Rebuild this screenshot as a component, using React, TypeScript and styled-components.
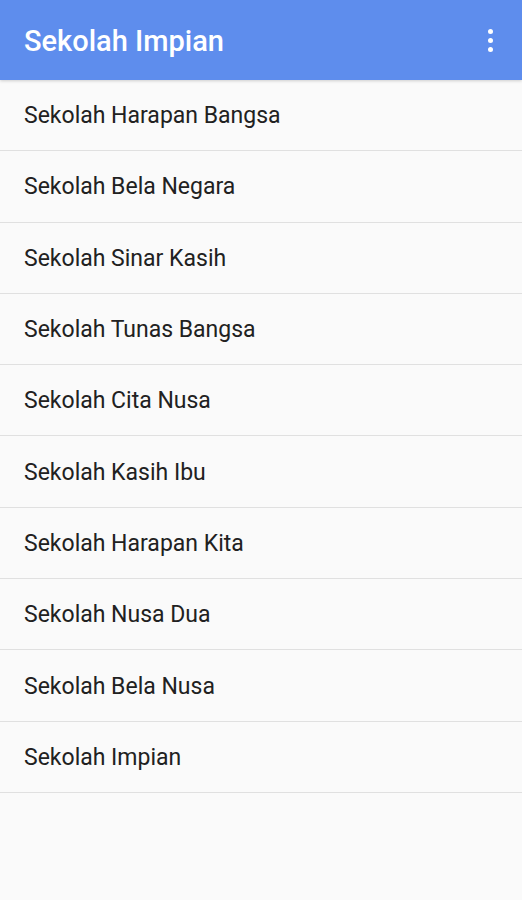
import styled, { createGlobalStyle } from "styled-components";

const GlobalStyle = createGlobalStyle`
  html, body {
    margin: 0;
    padding: 0;
    background: #fafafa;
    font-family: Roboto, "Noto Sans", Arial, sans-serif;
  }
`;

const Screen = styled.div`
  min-height: 900px;
  background: #fafafa;
  display: flex;
  flex-direction: column;
`;

const AppBar = styled.header`
  height: 80px;
  background: #5e8ded;
  display: flex;
  align-items: center;
  justify-content: space-between;
  padding: 0 20px 0 24px;
  box-shadow: 0 1px 3px rgba(0, 0, 0, 0.18);
  position: relative;
  z-index: 1;
`;

const Title = styled.h1`
  margin: 0;
  color: #fff;
  font-size: 29px;
  font-weight: 500;
  line-height: 1;
  padding-top: 2px;
`;

const MenuButton = styled.button`
  border: none;
  background: none;
  padding: 0;
  width: 24px;
  height: 40px;
  display: flex;
  flex-direction: column;
  align-items: center;
  justify-content: center;
  gap: 4px;
  cursor: pointer;
`;

const Dot = styled.span`
  width: 5px;
  height: 5px;
  border-radius: 50%;
  background: #fff;
`;

const List = styled.ul`
  list-style: none;
  margin: 0;
  padding: 0;
`;

const Item = styled.li`
  height: 71.3px;
  box-sizing: border-box;
  display: flex;
  align-items: center;
  padding: 1px 24px 0;
  border-bottom: 1.5px solid #e0e0e0;
  color: #212121;
  font-size: 23px;
`;

const schools = [
  "Sekolah Harapan Bangsa",
  "Sekolah Bela Negara",
  "Sekolah Sinar Kasih",
  "Sekolah Tunas Bangsa",
  "Sekolah Cita Nusa",
  "Sekolah Kasih Ibu",
  "Sekolah Harapan Kita",
  "Sekolah Nusa Dua",
  "Sekolah Bela Nusa",
  "Sekolah Impian"
];

export default function App() {
  return (
    <>
      <GlobalStyle />
      <Screen>
        <AppBar>
          <Title>Sekolah Impian</Title>
          <MenuButton aria-label="more options">
            <Dot />
            <Dot />
            <Dot />
          </MenuButton>
        </AppBar>
        <List>
          {schools.map((name) => (
            <Item key={name}>{name}</Item>
          ))}
        </List>
      </Screen>
    </>
  );
}
